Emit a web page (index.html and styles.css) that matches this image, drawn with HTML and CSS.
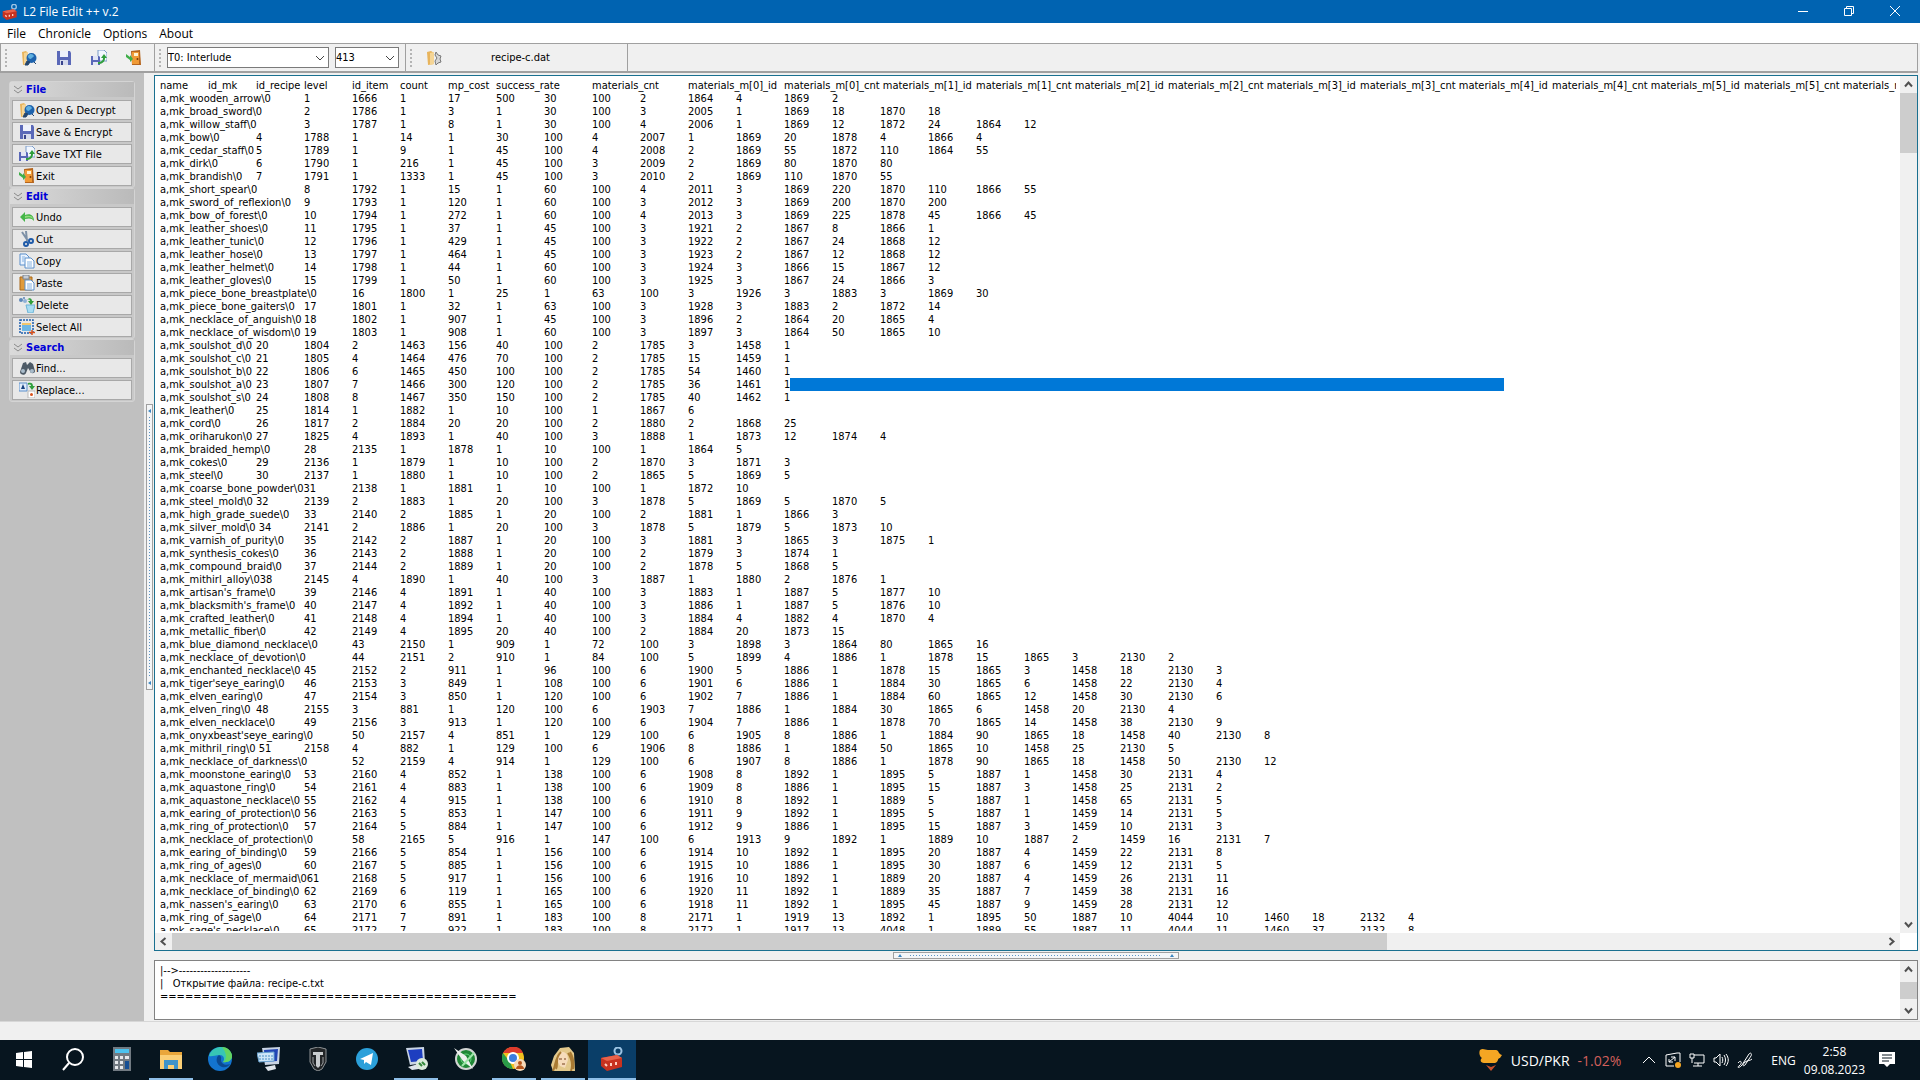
FILE: index.html
```html
<!DOCTYPE html>
<html lang="en">
<head>
    <meta charset="UTF-8">
    <meta name="viewport" content="width=device-width, initial-scale=1.0">
    <title>L2 File Edit ++ v.2</title>
    <link rel="stylesheet" href="styles.css">
</head>
<body>
    <!-- Shared icons -->
    <svg class="defs" width="0" height="0">
        <symbol id="i-open" viewBox="0 0 16 16">
            <path d="M1 2l4-1 2 2v11l-5 1z" fill="#e8b45c"/>
            <path d="M3 3l4-1v12l-4 1z" fill="#f5d596"/>
            <circle cx="10.500" cy="8" r="5" fill="#1d62ad"/>
            <path d="M7 6c2-3 5-2 6 0-1 2-2 1-3 3-2 0-3-1-3-3z" fill="#5fb0e0"/>
            <path d="M6 11l-2 4h3l2-3zM13 12l2 2" fill="#24466f" stroke="#24466f"/>
        </symbol>
        <symbol id="i-save" viewBox="0 0 16 16">
            <path d="M1 1h13l1 2v12H1z" fill="#5a68b8"/>
            <path d="M4 1h8v6H4z" fill="#eef1fb"/>
            <path d="M4 10h8v5H4z" fill="#d5daec"/>
            <path d="M5 11h2v4H5z" fill="#39448c"/>
        </symbol>
        <symbol id="i-savetxt" viewBox="0 0 16 16">
            <path d="M7 0h6l3 3v8H7z" fill="#f2f7ff" stroke="#7b9cc9"/>
            <path d="M0 6h8l1 1v8H0z" fill="#5a68b8"/>
            <path d="M2 6h5v4H2zM2 12h5v3H2z" fill="#e2e6f5"/>
            <path d="M7 12c4 0 5-2 5-4h-2l3-4 3 4h-2c0 4-3 6-7 6z" fill="#2f9e3c"/>
        </symbol>
        <symbol id="i-exit" viewBox="0 0 16 16">
            <path d="M5 1l9-1 1 15H6z" fill="#b5651d"/>
            <path d="M6 2h7v12H6z" fill="#f09a35"/>
            <path d="M8 3h4v3H8z" fill="#fff3d0"/>
            <circle cx="11.500" cy="9" r="1" fill="#7a3d08"/>
            <path d="M0 4l4 3V5l3 4-3 3v-2L0 7z" fill="#3fae49"/>
        </symbol>
        <symbol id="i-undo" viewBox="0 0 16 16">
            <path d="M1 8l5-5v3c5-2 9 0 9 6-2-3-5-3-9-2v3z" fill="#45b549"/>
            <path d="M6 7c5-1 8 0 8 3-2-2-5-2-8-1z" fill="#8fdc7a"/>
        </symbol>
        <symbol id="i-cut" viewBox="0 0 16 16">
            <path d="M3 1l6 9M7 0l1 10" stroke="#7d90a6" stroke-width="2" fill="none"/>
            <circle cx="7" cy="13" r="2" fill="none" stroke="#1f5aa8" stroke-width="2"/>
            <circle cx="12" cy="10" r="2" fill="none" stroke="#1f5aa8" stroke-width="2"/>
        </symbol>
        <symbol id="i-copy" viewBox="0 0 16 16">
            <path d="M1 1h6l3 3v8H1z" fill="#eaf3ff" stroke="#5b8fcb"/>
            <path d="M6 5h6l3 3v7H6z" fill="#fff" stroke="#5b8fcb"/>
            <path d="M8 9h5M8 11h5M8 13h5M3 4h3M3 6h2M3 8h2" stroke="#85b1e0"/>
        </symbol>
        <symbol id="i-paste" viewBox="0 0 16 16">
            <path d="M1 2h12v13H1z" fill="#e09b3c" stroke="#a9691a"/>
            <path d="M4 0h6v4H4z" fill="#c7cdd6" stroke="#7d8590"/>
            <path d="M6 5h6l3 3v7H6z" fill="#fff" stroke="#5b8fcb"/>
            <path d="M8 9h5M8 11h5M8 13h5" stroke="#85b1e0"/>
        </symbol>
        <symbol id="i-delete" viewBox="0 0 16 16">
            <path d="M7 8h9l-2 8H9z" fill="#a8dcf2" stroke="#6bb3d6"/>
            <path d="M8 3c2-3 5-2 5 1h2l-3 4-3-4h2c0-1-1-2-3-1z" fill="#2f9e3c"/>
            <circle cx="2" cy="3" r="2" fill="#5b86b8"/>
            <circle cx="6" cy="4" r="2" fill="#8fb0d6"/>
            <circle cx="5" cy="1" r="1" fill="#5b86b8"/>
        </symbol>
        <symbol id="i-selall" viewBox="0 0 16 16">
            <path d="M1 1h13v13H1z" fill="none" stroke="#1e5fae" stroke-width="1.500" stroke-dasharray="2 1"/>
            <path d="M3 4h9v8H3z" fill="#6db7e6"/>
            <path d="M3 4h9v2H3z" fill="#f1c66c"/>
            <path d="M13 11v5M10 13.500h6" stroke="#d9531e" stroke-width="1.500"/>
        </symbol>
        <symbol id="i-find" viewBox="0 0 16 16">
            <path d="M4 3l3-1 1 3 3-3 3 2 2 7c0 3-5 3-5 0l-2-3-2 5c-1 3-6 2-6-1z" fill="#4d5a66"/>
            <circle cx="4" cy="11" r="2" fill="#a9bccb"/>
            <circle cx="13" cy="11" r="2" fill="#a9bccb"/>
        </symbol>
        <symbol id="i-replace" viewBox="0 0 16 16">
            <path d="M0 1h8v8H0z" fill="#e2ecf9" stroke="#5b8fcb"/>
            <path d="M2 7l2-5 2 5z" fill="#18417f"/>
            <path d="M9 9h7v7H9z" fill="#fff" stroke="#b9b9b9"/>
            <circle cx="12.500" cy="12.500" r="1.500" fill="#d9531e"/>
            <path d="M9 1c3-1 5 0 5 3h2l-3 4-3-4h2c0-1-1-2-3-1z" fill="#2f9e3c"/>
        </symbol>
        <symbol id="i-go" viewBox="0 0 16 16">
            <path d="M1 2l4-1 3 2v11l-6 1z" fill="#e8b45c"/>
            <path d="M4 3l4-1v12l-4 1z" fill="#f5d596"/>
            <path d="M10 2l2 3 3 1-1 3 1 3-3 1-2 2-1-4 2-3-2-3z" fill="#d7d7d7" stroke="#777"/>
        </symbol>
        <symbol id="i-box" viewBox="0 0 24 24">
            <circle cx="18" cy="4" r="3.500" fill="none" stroke="#9cc4e4" stroke-width="2"/>
            <path d="M17 7l-2 5" stroke="#7aa5c9" stroke-width="2"/>
            <path d="M1 11l16-3 5 3v9l-15 4-6-5z" fill="#c8321f"/>
            <path d="M1 11l16-3 5 3-15 3z" fill="#e8624a"/>
            <path d="M5 17l2 2M11 16v3M16 15v3" stroke="#ffd0c0" stroke-width="2"/>
        </symbol>
        <symbol id="i-up" viewBox="0 0 9 9"><path d="M1 6.500l3.500-4 3.500 4" fill="none" stroke="#505050" stroke-width="2"/></symbol>
        <symbol id="i-down" viewBox="0 0 9 9"><path d="M1 2.500l3.500 4 3.500-4" fill="none" stroke="#505050" stroke-width="2"/></symbol>
        <symbol id="i-left" viewBox="0 0 9 9"><path d="M6.500 1l-4 3.500 4 3.500" fill="none" stroke="#505050" stroke-width="2"/></symbol>
        <symbol id="i-right" viewBox="0 0 9 9"><path d="M2.500 1l4 3.500-4 3.500" fill="none" stroke="#505050" stroke-width="2"/></symbol>
        <symbol id="i-chev" viewBox="0 0 10 10"><path d="M1 3l4 4 4-4" fill="none" stroke="#444"/></symbol>
        <symbol id="i-dbl" viewBox="0 0 8 10"><path d="M0 1l4 3 4-3M0 5l4 3 4-3" fill="none" stroke="#8a8a8a"/></symbol>
    </svg>

    <header class="titlebar">
        <svg class="app-icon"><use href="#i-box"/></svg>
        <h1>L2 File Edit ++ v.2</h1>
        <div class="win-buttons">
            <button type="button" aria-label="Minimize"><svg viewBox="0 0 12 12"><path d="M1 6.500h10"/></svg></button>
            <button type="button" aria-label="Restore"><svg viewBox="0 0 12 12"><path d="M1.500 3.500h7v7h-7zM3.500 3.500v-2h7v7h-2"/></svg></button>
            <button type="button" aria-label="Close"><svg viewBox="0 0 12 12"><path d="M1 1l10 10M11 1L1 11"/></svg></button>
        </div>
    </header>

    <nav class="menu">
        <a href="#">File</a>
        <a href="#">Chronicle</a>
        <a href="#">Options</a>
        <a href="#">About</a>
    </nav>

    <div class="toolbar">
        <div class="band band-file">
            <button type="button" aria-label="Open"><svg><use href="#i-open"/></svg></button>
            <button type="button" aria-label="Save"><svg><use href="#i-save"/></svg></button>
            <button type="button" aria-label="Save TXT"><svg><use href="#i-savetxt"/></svg></button>
            <button type="button" aria-label="Exit"><svg><use href="#i-exit"/></svg></button>
        </div>
        <div class="band band-select">
            <div class="combo combo-wide">
                <select aria-label="Chronicle"><option>T0: Interlude</option></select>
                <svg><use href="#i-chev"/></svg>
            </div>
            <div class="combo">
                <select aria-label="Version"><option>413</option></select>
                <svg><use href="#i-chev"/></svg>
            </div>
        </div>
        <div class="band band-recent">
            <button type="button"><svg><use href="#i-go"/></svg><span>recipe-c.dat</span></button>
        </div>
    </div>

    <div class="workspace">
        <aside class="sidebar">
            <section class="group">
                <h2><svg><use href="#i-dbl"/></svg>File</h2>
                <button type="button"><svg><use href="#i-open"/></svg>Open &amp; Decrypt</button>
                <button type="button"><svg><use href="#i-save"/></svg>Save &amp; Encrypt</button>
                <button type="button"><svg><use href="#i-savetxt"/></svg>Save TXT File</button>
                <button type="button"><svg><use href="#i-exit"/></svg>Exit</button>
            </section>
            <section class="group">
                <h2><svg><use href="#i-dbl"/></svg>Edit</h2>
                <button type="button"><svg><use href="#i-undo"/></svg>Undo</button>
                <button type="button"><svg><use href="#i-cut"/></svg>Cut</button>
                <button type="button"><svg><use href="#i-copy"/></svg>Copy</button>
                <button type="button"><svg><use href="#i-paste"/></svg>Paste</button>
                <button type="button"><svg><use href="#i-delete"/></svg>Delete</button>
                <button type="button"><svg><use href="#i-selall"/></svg>Select All</button>
            </section>
            <section class="group">
                <h2><svg><use href="#i-dbl"/></svg>Search</h2>
                <button type="button"><svg><use href="#i-find"/></svg>Find...</button>
                <button type="button"><svg><use href="#i-replace"/></svg>Replace...</button>
            </section>
        </aside>

        <div class="splitter splitter-v">
            <div class="grip"><i></i><span></span><i></i></div>
        </div>

        <main class="content">
            <div class="editor">
                <textarea id="editor" aria-label="File text" wrap="off" spellcheck="false"></textarea>
                <div class="scroll scroll-v">
                    <button type="button" aria-label="Scroll up"><svg><use href="#i-up"/></svg></button>
                    <div class="track"><div class="thumb"></div></div>
                    <button type="button" aria-label="Scroll down"><svg><use href="#i-down"/></svg></button>
                </div>
                <div class="scroll scroll-h">
                    <button type="button" aria-label="Scroll left"><svg><use href="#i-left"/></svg></button>
                    <div class="track"><div class="thumb"></div></div>
                    <button type="button" aria-label="Scroll right"><svg><use href="#i-right"/></svg></button>
                </div>
            </div>
            <div class="splitter splitter-h">
                <div class="grip"><i></i><span></span><i></i></div>
            </div>
            <div class="log">
                <textarea aria-label="Log" readonly wrap="off" spellcheck="false">
|--&gt;--------------------
|   Открытие файла: recipe-c.txt
===========================================</textarea>
                <div class="scroll scroll-v">
                    <button type="button" aria-label="Scroll up"><svg><use href="#i-up"/></svg></button>
                    <div class="track"><div class="thumb"></div></div>
                    <button type="button" aria-label="Scroll down"><svg><use href="#i-down"/></svg></button>
                </div>
            </div>
        </main>
    </div>

    <div class="statusbar"></div>

    <footer class="taskbar">
        <div class="apps">
            <button type="button" aria-label="Start"><svg viewBox="0 0 24 24"><path d="M4 6l7-1v7H4zM12 5l8-1v8h-8zM4 13h7v7l-7-1zM12 13h8v8l-8-1z" fill="#fff"/></svg></button>
            <button type="button" aria-label="Search"><svg viewBox="0 0 24 24"><circle cx="14" cy="10" r="8" fill="none" stroke="#fff" stroke-width="2"/><path d="M8 16l-6 7" stroke="#fff" stroke-width="2"/></svg></button>
            <button type="button" aria-label="Calculator"><svg viewBox="0 0 24 24"><path d="M3 0h18v24H3z" fill="#717a82"/><path d="M5 2h14v4H5z" fill="#4cc2ee"/><path d="M5 9h3v3H5zM10 9h3v3h-3zM15 9h4v3h-4zM5 14h3v3H5zM10 14h3v3h-3zM5 19h3v3H5zM10 19h3v3h-3z" fill="#e6e9ec"/><path d="M15 14h4v8h-4z" fill="#164f94"/></svg></button>
            <button type="button" class="running" aria-label="Explorer"><svg viewBox="0 0 24 24"><path d="M1 3h8l2 2h12v17H1z" fill="#e9a63b"/><path d="M1 8h22v14H1z" fill="#fbcf76"/><path d="M5 13h14v9h-4v-4H9v4H5z" fill="#3f93c9"/></svg></button>
            <button type="button" aria-label="Edge"><svg viewBox="0 0 24 24"><circle cx="12" cy="12" r="12" fill="#1374cf"/><path d="M1 9C3 2 9 0 13 0c7 0 11 5 11 9 0 4-4 7-9 6 2-3 1-7-3-7-5 0-8 2-11 1z" fill="#37c6b4"/><path d="M14 0c6 0 10 5 10 9 0 4-4 7-9 6 5-3 3-10-1-15z" fill="#63d460"/><path d="M11 8c-4 3-3 10 3 12 4 1 7-1 8-3-4 2-9 0-9-4 0-2 1-3-2-5z" fill="#0b4a91"/></svg></button>
            <button type="button" aria-label="On-screen keyboard"><svg viewBox="0 0 24 24"><path d="M5 1l18-1-1 17-14 1z" fill="#c9d4e4"/><path d="M7 3l14-1-1 12-12 1z" fill="#2246b5"/><path d="M0 6l17-1v9L2 15z" fill="#cfe6f7" stroke="#67a2d0"/><path d="M2 9h14M2 12h14" stroke="#4a8fc4" stroke-dasharray="2 1"/><path d="M8 20l10-2 1 4-8 2z" fill="#dfe5ec"/></svg></button>
            <button type="button" aria-label="World of Tanks"><svg viewBox="0 0 24 24"><path d="M4 2l8-2 8 2v13l-4 7-4 2-4-2-4-7z" fill="#222527" stroke="#8f9395"/><path d="M7 5h10v3h-3v11l-2 2-2-2V8H7z" fill="#c9ccce"/><path d="M7 10v6l2 3M17 10v6l-2 3" stroke="#9da1a3" fill="none"/></svg></button>
            <button type="button" aria-label="Telegram"><svg viewBox="0 0 24 24"><circle cx="12" cy="12" r="11" fill="#2ba0da"/><path d="M5 12l13-6-2 12-5-3-2 2v-4z" fill="#fff"/></svg></button>
            <button type="button" class="running" aria-label="Remote desktop"><svg viewBox="0 0 24 24"><path d="M2 1l18-1 1 16-15 2z" fill="#c9d4e4"/><path d="M4 3l14-1 1 12-12 1z" fill="#1d3ec0"/><path d="M4 20l10-3 1 5-7 1z" fill="#dfe5ec"/><circle cx="18" cy="17" r="6" fill="#dcebdc"/><path d="M15 16l3 3M18 15l3 3" stroke="#35893c" stroke-width="2"/></svg></button>
            <button type="button" aria-label="Radar"><svg viewBox="0 0 24 24"><circle cx="13" cy="12" r="10" fill="#1f8736" stroke="#d2d6d4" stroke-width="2"/><circle cx="13" cy="12" r="5" fill="none" stroke="#63d67c"/><path d="M1 1l12 8 7 13-10-8z" fill="#eef1ee"/><path d="M9 19l12-13" stroke="#9de6a8" stroke-width="2"/></svg></button>
            <button type="button" class="running" aria-label="Chrome"><svg viewBox="0 0 24 24"><circle cx="11" cy="11" r="11" fill="#f2c01e"/><path d="M1 6C6-3 18-2 21 6H11z" fill="#dd3b2c"/><path d="M1 6l7 9 3 7C1 22-2 12 1 6z" fill="#2a9c49"/><circle cx="11" cy="11" r="5" fill="#3b7de0" stroke="#fff" stroke-width="2"/><circle cx="18" cy="18" r="6" fill="#f6d9b8"/><circle cx="18" cy="16" r="2" fill="#b5541a"/><path d="M14 22c0-5 8-5 8 0z" fill="#b5541a"/></svg></button>
            <button type="button" class="running" aria-label="Lineage II"><svg viewBox="0 0 24 24"><path d="M2 24l-2-6 3-9 6-8 9-1 5 6 1 18z" fill="#e3c98c"/><path d="M9 5c6-1 8 3 8 8l-3 8-5-2-3-6z" fill="#f6dcbc"/><path d="M2 24c3-6 2-13 8-19M5 22c2-4 0-9 2-13M20 24c2-6 1-12-3-18M22 22c1-6 0-12-3-17" stroke="#a87a33" stroke-width="2" fill="none"/><path d="M8 12h3M13 12h2M11 17h3" stroke="#75401c"/></svg></button>
            <button type="button" class="running active" aria-label="L2 File Edit"><svg><use href="#i-box"/></svg></button>
        </div>
        <div class="tray">
            <a class="ticker" href="#">
                <svg viewBox="0 0 24 24"><path d="M1 2c3-2 5 0 8 0h8c3 0 2 4 6 5l-2 3c-3 0-1 4-5 5H5c-4 0-4-4-2-5-3-2-3-6-2-8z" fill="#f5a623"/><path d="M7 17l5 2 5-2-5 6z" fill="#c8502a"/></svg>
                <span>USD/PKR</span>
                <span class="down">-1.02%</span>
            </a>
            <div class="tray-icons">
                <svg viewBox="0 0 16 16"><path d="M2 11l6-6 6 6"/></svg>
                <svg viewBox="0 0 16 16"><path d="M1 3l11-2h3v9M1 3v11h8M4 10l6-5M6 5h4v4M4 7v3h4"/><circle class="dot" cx="13" cy="13" r="3"/></svg>
                <svg viewBox="0 0 16 16"><path d="M5 3h10v8H5M4 14h9M9 11v3M1 2h4v4H1zM3 6v5"/></svg>
                <svg viewBox="0 0 16 16"><path d="M1 6h2l4-4v12l-4-4H1zM9 5c1 2 1 4 0 6M11 3c2 3 2 7 0 10M13 2c3 4 3 8 0 12"/></svg>
                <svg viewBox="0 0 16 16"><path d="M1 11c3-4 5 0 1 3-3 2 1 2 3-1l7-11c2-2 3 0 2 2L8 13c-2 2-3 0 0-3 3-2 5-1 7-3"/></svg>
            </div>
            <span class="lang">ENG</span>
            <div class="clock"><span>2:58</span><span>09.08.2023</span></div>
            <button type="button" class="notify" aria-label="Notifications"><svg viewBox="0 0 16 16"><path d="M0 0h16v12h-5l-3 3-3-3H0z" fill="#fff"/><path d="M3 3h10M3 6h10M3 9h7" stroke="#07151f"/></svg></button>
        </div>
    </footer>

    <script src="recipes.js"></script>
</body>
</html>
```
FILE: recipes.js
```js
// Fields are split by spaces here and joined by tabs in the editor, ~ is a plain space
const source = String.raw`name id_mk id_recipe level id_item count mp_cost success_rate materials_cnt materials_m[0]_id materials_m[0]_cnt~materials_m[1]_id materials_m[1]_cnt~materials_m[2]_id materials_m[2]_cnt~materials_m[3]_id materials_m[3]_cnt~materials_m[4]_id materials_m[4]_cnt~materials_m[5]_id materials_m[5]_cnt~materials_m[6]_id
a,mk_wooden_arrow\0 1 1666 1 17 500 30 100 2 1864 4 1869 2
a,mk_broad_sword\0 2 1786 1 3 1 30 100 3 2005 1 1869 18 1870 18
a,mk_willow_staff\0 3 1787 1 8 1 30 100 4 2006 1 1869 12 1872 24 1864 12
a,mk_bow\0 4 1788 1 14 1 30 100 4 2007 1 1869 20 1878 4 1866 4
a,mk_cedar_staff\0 5 1789 1 9 1 45 100 4 2008 2 1869 55 1872 110 1864 55
a,mk_dirk\0 6 1790 1 216 1 45 100 3 2009 2 1869 80 1870 80
a,mk_brandish\0 7 1791 1 1333 1 45 100 3 2010 2 1869 110 1870 55
a,mk_short_spear\0 8 1792 1 15 1 60 100 4 2011 3 1869 220 1870 110 1866 55
a,mk_sword_of_reflexion\0 9 1793 1 120 1 60 100 3 2012 3 1869 200 1870 200
a,mk_bow_of_forest\0 10 1794 1 272 1 60 100 4 2013 3 1869 225 1878 45 1866 45
a,mk_leather_shoes\0 11 1795 1 37 1 45 100 3 1921 2 1867 8 1866 1
a,mk_leather_tunic\0 12 1796 1 429 1 45 100 3 1922 2 1867 24 1868 12
a,mk_leather_hose\0 13 1797 1 464 1 45 100 3 1923 2 1867 12 1868 12
a,mk_leather_helmet\0 14 1798 1 44 1 60 100 3 1924 3 1866 15 1867 12
a,mk_leather_gloves\0 15 1799 1 50 1 60 100 3 1925 3 1867 24 1866 3
a,mk_piece_bone_breastplate\0 16 1800 1 25 1 63 100 3 1926 3 1883 3 1869 30
a,mk_piece_bone_gaiters\0 17 1801 1 32 1 63 100 3 1928 3 1883 2 1872 14
a,mk_necklace_of_anguish\0 18 1802 1 907 1 45 100 3 1896 2 1864 20 1865 4
a,mk_necklace_of_wisdom\0 19 1803 1 908 1 60 100 3 1897 3 1864 50 1865 10
a,mk_soulshot_d\0 20 1804 2 1463 156 40 100 2 1785 3 1458 1
a,mk_soulshot_c\0 21 1805 4 1464 476 70 100 2 1785 15 1459 1
a,mk_soulshot_b\0 22 1806 6 1465 450 100 100 2 1785 54 1460 1
a,mk_soulshot_a\0 23 1807 7 1466 300 120 100 2 1785 36 1461 1
a,mk_soulshot_s\0 24 1808 8 1467 350 150 100 2 1785 40 1462 1
a,mk_leather\0 25 1814 1 1882 1 10 100 1 1867 6
a,mk_cord\0 26 1817 2 1884 20 20 100 2 1880 2 1868 25
a,mk_oriharukon\0 27 1825 4 1893 1 40 100 3 1888 1 1873 12 1874 4
a,mk_braided_hemp\0 28 2135 1 1878 1 10 100 1 1864 5
a,mk_cokes\0 29 2136 1 1879 1 10 100 2 1870 3 1871 3
a,mk_steel\0 30 2137 1 1880 1 10 100 2 1865 5 1869 5
a,mk_coarse_bone_powder\031 2138 1 1881 1 10 100 1 1872 10
a,mk_steel_mold\0 32 2139 2 1883 1 20 100 3 1878 5 1869 5 1870 5
a,mk_high_grade_suede\0 33 2140 2 1885 1 20 100 2 1881 1 1866 3
a,mk_silver_mold\0~34 2141 2 1886 1 20 100 3 1878 5 1879 5 1873 10
a,mk_varnish_of_purity\0 35 2142 2 1887 1 20 100 3 1881 3 1865 3 1875 1
a,mk_synthesis_cokes\0 36 2143 2 1888 1 20 100 2 1879 3 1874 1
a,mk_compound_braid\0 37 2144 2 1889 1 20 100 2 1878 5 1868 5
a,mk_mithirl_alloy\038 2145 4 1890 1 40 100 3 1887 1 1880 2 1876 1
a,mk_artisan's_frame\0 39 2146 4 1891 1 40 100 3 1883 1 1887 5 1877 10
a,mk_blacksmith's_frame\0 40 2147 4 1892 1 40 100 3 1886 1 1887 5 1876 10
a,mk_crafted_leather\0 41 2148 4 1894 1 40 100 3 1884 4 1882 4 1870 4
a,mk_metallic_fiber\0 42 2149 4 1895 20 40 100 2 1884 20 1873 15
a,mk_blue_diamond_necklace\0 43 2150 1 909 1 72 100 3 1898 3 1864 80 1865 16
a,mk_necklace_of_devotion\0 44 2151 2 910 1 84 100 5 1899 4 1886 1 1878 15 1865 3 2130 2
a,mk_enchanted_necklace\0 45 2152 2 911 1 96 100 6 1900 5 1886 1 1878 15 1865 3 1458 18 2130 3
a,mk_tiger'seye_earing\0 46 2153 3 849 1 108 100 6 1901 6 1886 1 1884 30 1865 6 1458 22 2130 4
a,mk_elven_earing\0 47 2154 3 850 1 120 100 6 1902 7 1886 1 1884 60 1865 12 1458 30 2130 6
a,mk_elven_ring\0 48 2155 3 881 1 120 100 6 1903 7 1886 1 1884 30 1865 6 1458 20 2130 4
a,mk_elven_necklace\0 49 2156 3 913 1 120 100 6 1904 7 1886 1 1878 70 1865 14 1458 38 2130 9
a,mk_onyxbeast'seye_earing\0 50 2157 4 851 1 129 100 6 1905 8 1886 1 1884 90 1865 18 1458 40 2130 8
a,mk_mithril_ring\0~51 2158 4 882 1 129 100 6 1906 8 1886 1 1884 50 1865 10 1458 25 2130 5
a,mk_necklace_of_darkness\0 52 2159 4 914 1 129 100 6 1907 8 1886 1 1878 90 1865 18 1458 50 2130 12
a,mk_moonstone_earing\0 53 2160 4 852 1 138 100 6 1908 8 1892 1 1895 5 1887 1 1458 30 2131 4
a,mk_aquastone_ring\0 54 2161 4 883 1 138 100 6 1909 8 1886 1 1895 15 1887 3 1458 25 2131 2
a,mk_aquastone_necklace\0 55 2162 4 915 1 138 100 6 1910 8 1892 1 1889 5 1887 1 1458 65 2131 5
a,mk_earing_of_protection\0 56 2163 5 853 1 147 100 6 1911 9 1892 1 1895 5 1887 1 1459 14 2131 5
a,mk_ring_of_protection\0 57 2164 5 884 1 147 100 6 1912 9 1886 1 1895 15 1887 3 1459 10 2131 3
a,mk_necklace_of_protection\0 58 2165 5 916 1 147 100 6 1913 9 1892 1 1889 10 1887 2 1459 16 2131 7
a,mk_earing_of_binding\0 59 2166 5 854 1 156 100 6 1914 10 1892 1 1895 20 1887 4 1459 22 2131 8
a,mk_ring_of_ages\0 60 2167 5 885 1 156 100 6 1915 10 1886 1 1895 30 1887 6 1459 12 2131 5
a,mk_necklace_of_mermaid\061 2168 5 917 1 156 100 6 1916 10 1892 1 1889 20 1887 4 1459 26 2131 11
a,mk_necklace_of_binding\0 62 2169 6 119 1 165 100 6 1920 11 1892 1 1889 35 1887 7 1459 38 2131 16
a,mk_nassen's_earing\0 63 2170 6 855 1 165 100 6 1918 11 1892 1 1895 45 1887 9 1459 28 2131 12
a,mk_ring_of_sage\0 64 2171 7 891 1 183 100 8 2171 1 1919 13 1892 1 1895 50 1887 10 4044 10 1460 18 2132 4
a,mk_sage's_necklace\0 65 2172 7 922 1 183 100 8 2172 1 1917 13 4048 1 1889 55 1887 11 4044 11 1460 37 2132 8`;

const editor = document.getElementById('editor');
const lines = source.split('\n').map(line => line.replaceAll(' ', '\t').replaceAll('~', ' '));

// Empty fields at the end of the soulshot_a row, kept selected
const row = lines.findIndex(line => line.includes('soulshot_a'));
const start = lines.slice(0, row + 1).join('\n').length;
const blanks = 15;
lines[row] += '\t'.repeat(blanks);

editor.value = lines.join('\n');
editor.focus({ preventScroll: true });
editor.setSelectionRange(start, start + blanks);
editor.scrollTop = 0;
editor.scrollLeft = 0;
```
FILE: styles.css
```css
* {
    box-sizing: border-box;
}

body {
    margin: 0;
    height: 100vh;
    display: flex;
    flex-direction: column;
    overflow: hidden;
    background: #f0f0f0;
    color: #000;
    font-family: "DejaVu Sans Condensed", "DejaVu Sans", sans-serif;
    font-size: 11px;
    line-height: 13px;
}

button, select, textarea {
    font: inherit;
    color: inherit;
    margin: 0;
    padding: 0;
    border: 0;
    border-radius: 0;
    background: none;
}

a {
    color: inherit;
    text-decoration: none;
}

h1, h2 {
    margin: 0;
}

.defs {
    position: absolute;
}

/* Title bar and menu */
.titlebar {
    display: flex;
    align-items: center;
    flex: none;
    height: 23px;
    padding-left: 2px;
    background: #0063b1;
    color: #fff;
    font-family: "Open Sans", sans-serif;
}

.titlebar h1 {
    flex: 1;
    margin-left: 5px;
    font-size: 12px;
    font-weight: normal;
}

.app-icon {
    width: 16px;
    height: 16px;
}

.win-buttons {
    display: flex;
    padding-right: 2px;
}

.win-buttons button {
    width: 46px;
    height: 20px;
}

.win-buttons svg {
    width: 12px;
    height: 12px;
    fill: none;
    stroke: #fff;
}

.menu {
    display: flex;
    align-items: center;
    flex: none;
    gap: 12px;
    height: 20px;
    padding-left: 7px;
    background: #fff;
    font-family: "Open Sans", sans-serif;
    font-size: 12px;
}

/* Toolbar */
.toolbar {
    display: flex;
    flex: none;
    height: 30px;
    margin-right: 2px;
    border: 1px solid #a0a0a0;
    border-bottom-width: 2px;
}

.band {
    display: flex;
    align-items: center;
    padding-left: 10px;
    border-right: 1px solid #a0a0a0;
}

.band::before {
    content: "";
    width: 2px;
    height: 18px;
    margin-left: -6px;
    background: repeating-linear-gradient(#b4b4b4 0 2px, transparent 2px 4px);
}

.band svg {
    display: block;
    width: 16px;
    height: 16px;
}

.band-file {
    width: 154px;
    gap: 19px;
}

.band-file::before {
    margin-right: -5px;
}

.band-select {
    width: 251px;
    gap: 6px;
}

.combo {
    display: flex;
    align-items: center;
    width: 64px;
    height: 21px;
    border: 1px solid #7a7a7a;
    background: #fff;
}

.combo-wide {
    width: 162px;
}

.combo select {
    flex: 1;
    min-width: 0;
    height: 19px;
    appearance: none;
}

.combo svg {
    flex: none;
    width: 10px;
    height: 10px;
    margin-right: 3px;
    margin-left: -13px;
    pointer-events: none;
}

.band-recent {
    width: 222px;
}

.band-recent button {
    display: flex;
    align-items: center;
    flex: 1;
    padding-left: 14px;
}

.band-recent span {
    flex: 1;
    padding-right: 28px;
}

/* Sidebar */
.workspace {
    display: flex;
    flex: 1;
    min-height: 0;
}

.sidebar {
    flex: none;
    width: 144px;
    padding: 8px 9px 0 9px;
    background: #c0c0c0;
}

.group {
    padding: 0 2px 1px;
    border: 1px solid #d4d4d4;
    border-radius: 3px;
    background: #c8c8c8;
}

.group h2 {
    display: flex;
    align-items: center;
    gap: 4px;
    height: 15px;
    margin: 0 -2px 3px;
    padding-left: 4px;
    background: linear-gradient(to right, #dadada, #bababa);
    color: #0000d8;
    font-size: 11px;
}

.group h2 svg {
    width: 8px;
    height: 10px;
}

.group button {
    display: flex;
    align-items: center;
    gap: 1px;
    width: 100%;
    height: 20px;
    margin-bottom: 2px;
    padding-left: 6px;
    border: 1px solid #a8a8a8;
    background: #e8e8e8;
}

.group button:last-child {
    margin-bottom: 0;
}

.group button svg {
    width: 16px;
    height: 16px;
}

/* Splitters */
.splitter {
    display: flex;
    align-items: center;
    justify-content: center;
    flex: none;
}

.splitter-v {
    width: 10px;
}

.splitter-h {
    height: 9px;
}

.grip {
    display: flex;
    align-items: center;
    justify-content: space-between;
    border: 1px solid #a0a0a0;
    background: #f4f6f8;
}

.grip span {
    flex: 1;
}

.grip i {
    border: 2px solid transparent;
}

.splitter-v .grip {
    flex-direction: column;
    width: 7px;
    height: 286px;
    padding: 4px 0;
}

.splitter-v .grip span {
    width: 1px;
    margin: 4px 0;
    background: repeating-linear-gradient(#5a93c4 0 1px, transparent 1px 3px);
}

.splitter-v .grip i {
    border-right: 3px solid #3d85c0;
    border-left: 0;
}

.splitter-h .grip {
    width: 286px;
    height: 7px;
    padding: 0 4px;
}

.splitter-h .grip span {
    height: 1px;
    margin: 0 8px;
    background: repeating-linear-gradient(to right, #5a93c4 0 1px, transparent 1px 3px);
}

.splitter-h .grip i {
    border-top: 0;
    border-bottom: 3px solid #3d85c0;
}

/* Editor and log */
.content {
    display: flex;
    flex-direction: column;
    flex: 1;
    min-width: 0;
    padding: 2px 2px 1px 0;
}

.editor {
    display: grid;
    grid-template: minmax(0, 1fr) 17px / minmax(0, 1fr) 17px;
    flex: 1;
    min-height: 0;
    border: 1px solid #1a7090;
    background: #fff;
}

textarea {
    display: block;
    padding: 3px 0 0 5px;
    border: 0;
    outline: 0;
    overflow: hidden;
    resize: none;
    white-space: pre;
    tab-size: 48px;
}

#editor {
    margin: 0 4px 2px 0;
}

#editor::selection {
    background: #0078d7;
    color: #fff;
}

.scroll {
    display: flex;
    background: #f0f0f0;
}

.scroll-v {
    flex-direction: column;
}

.scroll button {
    display: flex;
    align-items: center;
    justify-content: center;
    flex: none;
    width: 17px;
    height: 17px;
}

.scroll svg {
    width: 9px;
    height: 9px;
}

.track {
    flex: 1;
}

.thumb {
    background: #cdcdcd;
}

.scroll-v .thumb {
    height: 60px;
}

.scroll-h .thumb {
    width: 71%;
    height: 17px;
}

.log {
    display: flex;
    flex: none;
    height: 60px;
    border: 1px solid #828282;
    background: #fff;
}

.log textarea {
    flex: 1;
    min-width: 0;
}

.log .track {
    display: flex;
    flex-direction: column;
    justify-content: center;
}

.log .thumb {
    height: 17px;
}

.statusbar {
    flex: none;
    height: 19px;
    border-top: 1px solid #d7d7d7;
}

/* Taskbar */
.taskbar {
    display: flex;
    justify-content: space-between;
    flex: none;
    height: 40px;
    background: #07151f;
    color: #fff;
    font-family: "Open Sans", sans-serif;
    font-size: 12px;
}

.apps {
    display: flex;
    gap: 1px;
}

.apps button {
    width: 48px;
    height: 40px;
    border-bottom: 2px solid transparent;
}

.apps svg {
    display: block;
    width: 24px;
    height: 24px;
    margin: 0 auto;
}

.apps .running {
    border-image: linear-gradient(to right, transparent 4px, #8fbfe8 4px calc(100% - 4px), transparent calc(100% - 4px)) 2;
    border-style: solid;
    border-width: 0 0 2px;
}

.apps .active {
    border-image: none;
    border-color: #8fbfe8;
    background: #0a3e68;
}

.tray {
    display: flex;
    align-items: center;
    padding-right: 25px;
}

.ticker {
    display: flex;
    align-items: center;
    gap: 8px;
    margin-right: 20px;
    font-size: 14px;
}

.ticker svg {
    width: 24px;
    height: 24px;
}

.down {
    color: #d2605c;
}

.tray-icons {
    display: flex;
    gap: 8px;
}

.tray-icons svg {
    width: 16px;
    height: 16px;
    fill: none;
    stroke: #fff;
}

.tray-icons .dot {
    fill: #f5a623;
    stroke: none;
}

.lang {
    margin: 0 8px 0 18px;
}

.clock {
    display: flex;
    flex-direction: column;
    align-items: center;
    gap: 5px;
}

.notify {
    margin-left: 14px;
}

.notify svg {
    display: block;
    width: 16px;
    height: 16px;
}
```
